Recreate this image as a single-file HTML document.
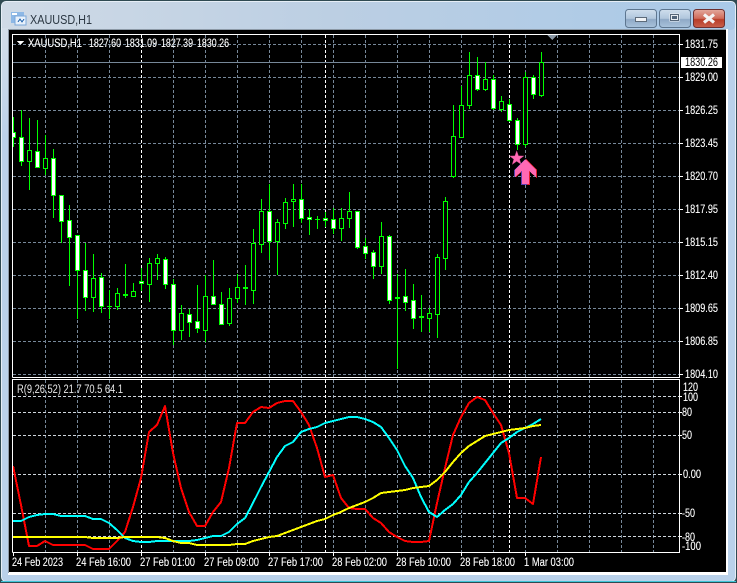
<!DOCTYPE html>
<html><head><meta charset="utf-8"><title>XAUUSD,H1</title>
<style>
html,body{margin:0;padding:0;background:#b9d1ea;width:737px;height:583px;overflow:hidden}
svg{display:block;position:absolute;left:0;top:0}
text{font-family:"Liberation Sans",sans-serif;font-size:11.5px;fill:#fff;stroke:#fff;stroke-width:.12}
.c{shape-rendering:crispEdges}
</style></head><body>
<svg width="737" height="583" viewBox="0 0 737 583" xmlns="http://www.w3.org/2000/svg">
<defs>
<linearGradient id="tb" x1="0" x2="1" y1="0" y2="0"><stop offset="0" stop-color="#cfdae6"/><stop offset=".45" stop-color="#bccfe3"/><stop offset="1" stop-color="#a9c9e8"/></linearGradient>
<linearGradient id="lf" x1="0" x2="0" y1="0" y2="1"><stop offset="0" stop-color="#d3dee9"/><stop offset=".2" stop-color="#bcd2e9"/><stop offset="1" stop-color="#b9d1ea"/></linearGradient>
<linearGradient id="bt" x1="0" x2="0" y1="0" y2="1"><stop offset="0" stop-color="#cfdeed"/><stop offset=".5" stop-color="#b0c6dc"/><stop offset=".55" stop-color="#8fa9c6"/><stop offset="1" stop-color="#a9c3dc"/></linearGradient>
<linearGradient id="cl" x1="0" x2="0" y1="0" y2="1"><stop offset="0" stop-color="#e3a99e"/><stop offset=".5" stop-color="#cf6a58"/><stop offset=".55" stop-color="#b83d28"/><stop offset="1" stop-color="#c9604c"/></linearGradient>
<clipPath id="m"><rect x="13" y="35" width="666" height="342"/></clipPath>
</defs>

<!-- window frame -->
<rect width="737" height="583" fill="#2f4a52"/>
<rect x="1" y="1" width="735" height="581" rx="5" fill="#e6eef6"/>
<rect x="2" y="2" width="733" height="579" rx="4" fill="#b9d1ea"/>
<rect x="2" y="2" width="733" height="28" rx="4" fill="url(#tb)"/>
<rect x="2" y="28" width="7" height="550" fill="url(#lf)"/>
<rect x="1" y="581" width="735" height="1" fill="#3fc6d8"/>
<rect x="8" y="29" width="720" height="546" fill="#fff"/>
<rect x="8" y="29" width="718" height="1" fill="#8c99a6"/>
<rect x="8" y="29" width="1" height="544" fill="#8c99a6"/>
<rect x="9" y="30" width="717" height="542" fill="#000"/>

<!-- title -->
<g class="c">
<rect x="11" y="12" width="13" height="11" fill="#8db8e6"/>
<rect x="15" y="16" width="11" height="9" fill="#e8f1fb" stroke="#7aa6d8"/>
<rect x="12" y="13" width="5" height="2" fill="#fff"/>
<path d="M18 22l2-3 2 3 2-3" fill="none" stroke="#3a76b8"/>
</g>
<text x="30" y="24" style="font-size:12.5px;fill:#2b3743;stroke:none" textLength="62" lengthAdjust="spacingAndGlyphs">XAUUSD,H1</text>

<!-- buttons -->
<rect x="625.5" y="9.5" width="31" height="18" rx="3" fill="url(#bt)" stroke="#5d7690"/>
<rect x="659.5" y="9.5" width="31" height="18" rx="3" fill="url(#bt)" stroke="#5d7690"/>
<rect x="693.5" y="9.5" width="31" height="18" rx="3" fill="url(#cl)" stroke="#6e3030"/>
<rect x="635.5" y="17.5" width="11" height="4" fill="#f0f3f6" stroke="#5d6b7a"/>
<rect x="670" y="14" width="9" height="7" fill="none" stroke="#eef2f6" stroke-width="1"/>
<rect x="670.5" y="14.5" width="8" height="6" fill="#e8edf2" stroke="#56677a"/>
<rect x="672" y="16" width="5" height="3" fill="#51647a"/>
<path d="M704 14.5l10 8M714 14.5l-10 8" stroke="#f4f4f4" stroke-width="3.2" fill="none"/>

<!-- grid main -->
<g class="c" fill="none" stroke="#778899" stroke-dasharray="3 2">
<path d="M13 44.5H679M13 77.5H679M13 110.5H679M13 143.5H679M13 176.5H679M13 209.5H679M13 242.5H679M13 275.5H679M13 308.5H679M13 341.5H679M13 374.5H679"/>
<path d="M45.5 35V377M77.5 35V377M109.5 35V377M173.5 35V377M205.5 35V377M237.5 35V377M269.5 35V377M301.5 35V377M333.5 35V377M365.5 35V377M397.5 35V377M429.5 35V377M461.5 35V377M493.5 35V377M525.5 35V377M557.5 35V377M589.5 35V377M621.5 35V377M653.5 35V377"/>
<path d="M45.5 380V552M77.5 380V552M109.5 380V552M173.5 380V552M205.5 380V552M237.5 380V552M269.5 380V552M301.5 380V552M333.5 380V552M365.5 380V552M397.5 380V552M429.5 380V552M461.5 380V552M493.5 380V552M525.5 380V552M557.5 380V552M589.5 380V552M621.5 380V552M653.5 380V552"/>
</g>
<g class="c" fill="none" stroke="#cfd6dd" stroke-dasharray="3 2">
<path d="M13 396.5H679M13 412.5H679M13 435.5H679M13 474.5H679M13 513.5H679M13 536.5H679"/>
</g>
<g class="c" fill="none" stroke="#fff" stroke-dasharray="3 2">
<path d="M141.5 35V377M325.5 35V377M509.5 35V377M141.5 380V552M325.5 380V552M509.5 380V552"/>
</g>

<!-- price line -->
<path class="c" d="M13 62.5H679" stroke="#778899" fill="none"/>

<!-- candles -->
<g class="c" clip-path="url(#m)">
<path fill="none" stroke="#0f0" d="M13.5 117V147M21.5 110V166M29.5 118V190M37.5 120V168M45.5 135V175M53.5 149V218M61.5 195V243M69.5 205V286M77.5 235V319M85.5 243V311M93.5 254V312M101.5 273V313M109.5 290V319M117.5 288V310M125.5 264V298M133.5 283V297M141.5 268V291M149.5 258V302M157.5 254V280M165.5 257V289M173.5 279V345M181.5 305V340M189.5 309V337M197.5 285V333M205.5 275V342M213.5 260V305M221.5 292V325M229.5 288V326M237.5 274V303M245.5 265V305M253.5 229V304M261.5 199V253M269.5 184V260M277.5 219V275M285.5 198V229M293.5 184V227M301.5 184V223M309.5 209V235M317.5 216V229M325.5 212V227M333.5 208V234M341.5 208V241M349.5 192V228M357.5 211V249M365.5 238V259M373.5 250V279M381.5 222V274M389.5 235V304M397.5 274V369M405.5 269V311M413.5 284V329M421.5 295V332M429.5 308V332M437.5 254V338M445.5 197V270M453.5 105V178M461.5 86V138M469.5 52V109M477.5 57V91M485.5 62V91M493.5 75V110M501.5 96V112M509.5 99V122M517.5 118V150M525.5 72V147M533.5 75V99M541.5 52V97"/>
<path fill="none" stroke="#0f0" d="M107 306.5h5M315 219.5h5"/>
<path fill="#fff" stroke="#0f0" d="M11.5 132.5h4v5h-4zM19.5 137.5h4v24h-4zM35.5 151.5h4v16h-4zM51.5 158.5h4v37h-4zM59.5 195.5h4v26h-4zM67.5 220.5h4v17h-4zM75.5 235.5h4v35h-4zM83.5 270.5h4v27h-4zM99.5 277.5h4v29h-4zM123.5 294.5h4v1h-4zM139.5 281.5h4v2h-4zM163.5 259.5h4v25h-4zM171.5 284.5h4v46h-4zM187.5 314.5h4v8h-4zM195.5 321.5h4v7h-4zM211.5 296.5h4v8h-4zM219.5 304.5h4v20h-4zM243.5 287.5h4v1h-4zM267.5 211.5h4v30h-4zM299.5 199.5h4v19h-4zM307.5 217.5h4v2h-4zM323.5 218.5h4v2h-4zM331.5 219.5h4v9h-4zM355.5 211.5h4v36h-4zM363.5 246.5h4v7h-4zM371.5 252.5h4v14h-4zM387.5 236.5h4v64h-4zM395.5 297.5h4v1h-4zM403.5 296.5h4v6h-4zM411.5 300.5h4v18h-4zM419.5 316.5h4v1h-4zM475.5 75.5h4v14h-4zM491.5 79.5h4v29h-4zM507.5 104.5h4v16h-4zM515.5 120.5h4v24h-4zM531.5 77.5h4v17h-4z"/>
<path fill="#000" stroke="#0f0" d="M27.5 150.5h4v11h-4zM43.5 158.5h4v10h-4zM91.5 278.5h4v19h-4zM115.5 293.5h4v13h-4zM131.5 291.5h4v5h-4zM147.5 263.5h4v21h-4zM155.5 258.5h4v5h-4zM179.5 313.5h4v17h-4zM203.5 296.5h4v34h-4zM227.5 298.5h4v25h-4zM235.5 287.5h4v11h-4zM251.5 243.5h4v47h-4zM259.5 211.5h4v33h-4zM275.5 222.5h4v19h-4zM283.5 202.5h4v21h-4zM291.5 199.5h4v2h-4zM339.5 218.5h4v10h-4zM347.5 211.5h4v7h-4zM379.5 236.5h4v30h-4zM427.5 313.5h4v5h-4zM435.5 257.5h4v57h-4zM443.5 201.5h4v57h-4zM451.5 136.5h4v40h-4zM459.5 105.5h4v32h-4zM467.5 75.5h4v30h-4zM483.5 79.5h4v10h-4zM499.5 101.5h4v8h-4zM523.5 77.5h4v67h-4zM539.5 62.5h4v33h-4z"/>
</g>

<!-- objects -->
<polygon points="516.7,150.8 518.5,155.9 523.8,156 519.6,159.2 521.1,164.4 516.7,161.3 512.3,164.4 513.8,159.2 509.6,156 514.9,155.9" fill="#ff69b4" stroke="#d0478c" stroke-width=".4"/>
<polygon class="c" points="526,159 537,170 537,178 530,172 530,185 522,185 522,171 516,177 516,170" fill="#e01e2c"/>
<polygon class="c" points="525,159 514,170 514,177 521,171 521,185 527,185 527,170" fill="#5a3fb0"/>
<polygon class="c" points="525.5,159 536,170 536,177 529,171 529,184 522,184 522,171 515,177 515,170" fill="#ff69b4"/>
<polygon class="c" points="547,35 557,35 552,40" fill="#8a97a4"/>

<!-- indicator lines -->
<g fill="none" stroke-width="2" stroke-linejoin="round" class="c">
<polyline stroke="#f00" points="13,466 21,505 29,546 37,546 45,541 53,545 61,545 69,545 77,545 85,545 93,549 101,549 109,549 117,541 125,532 133,507 141,478 149,432 157,425 165,406 173,453 181,488 189,512 197,526 205,526 213,512 221,502 229,468 237,423 245,423 253,412 261,407 269,408 277,403 285,401 293,401 301,412 309,425 317,448 325,477 333,475 341,498 349,508 357,509 365,509 373,518 381,523 389,532 397,537 405,541 413,542 421,542 429,541 437,503 445,468 453,435 461,417 469,403 477,397 485,400 493,413 501,425 509,453 517,498 525,498 533,504 541,457"/>
<polyline stroke="#0ff" points="13,521 21,521 29,517 37,515 45,514 53,514 61,516 69,516 77,516 85,516 93,519 101,519 109,523 117,530 125,538 133,541 141,542 149,542 157,541 165,541 173,541 181,541 189,541 197,540 205,538 213,536 221,536 229,532 237,524 245,518 253,503 261,487 269,472 277,457 285,446 293,442 301,432 309,429 317,427 325,423 333,421 341,419 349,417 357,417 365,419 373,422 381,427 389,438 397,450 405,466 413,478 421,497 429,512 437,517 445,510 453,504 461,495 469,482 477,473 485,463 493,453 501,443 509,438 517,432 525,428 533,424 541,419"/>
<polyline stroke="#ff0" points="13,537 85,537 93,538 117,538 125,537 149,537 157,537 165,538 173,541 181,543 189,543 197,545 229,545 237,544 245,544 253,541 261,539 269,537 277,536 285,533 293,530 301,527 309,524 317,521 325,519 333,515 341,512 349,508 357,505 365,502 373,498 381,493 389,492 397,491 405,490 413,488 421,487 429,486 437,480 445,472 453,462 461,453 469,446 477,441 485,436 493,434 501,432 509,430 517,429 525,428 533,426 541,425"/>
</g>

<!-- frames -->
<g class="c" fill="none" stroke="#fff">
<path d="M12.5 377.5V34.5H679.5V377.5H12.5"/>
<path d="M12.5 552.5V379.5H679.5V552.5H12.5"/>
<path d="M680 44.5h3M680 77.5h3M680 110.5h3M680 143.5h3M680 176.5h3M680 209.5h3M680 242.5h3M680 275.5h3M680 308.5h3M680 341.5h3M680 374.5h3M680 396.5h2M680 412.5h2M680 435.5h2M680 474.5h2M680 513.5h2M680 536.5h2"/>
<path d="M13.5 553v3M77.5 553v3M141.5 553v3M205.5 553v3M269.5 553v3M333.5 553v3M397.5 553v3M461.5 553v3M525.5 553v3"/>
</g>

<!-- header text -->
<polygon class="c" points="17,41 24,41 20.5,45" fill="#fff"/>
<text x="28" y="47" textLength="54" lengthAdjust="spacingAndGlyphs">XAUUSD,H1</text>
<text x="89" y="47" textLength="32" lengthAdjust="spacingAndGlyphs">1827.60</text>
<text x="125" y="47" textLength="32" lengthAdjust="spacingAndGlyphs">1831.09</text>
<text x="161" y="47" textLength="32" lengthAdjust="spacingAndGlyphs">1827.39</text>
<text x="197" y="47" textLength="32" lengthAdjust="spacingAndGlyphs">1830.26</text>
<text x="17" y="393" textLength="106" lengthAdjust="spacingAndGlyphs" style="fill:#e8e8e8;stroke:none">R(9,26,52) 21.7 70.5 64.1</text>

<!-- price scale -->
<text x="685" y="48" textLength="33" lengthAdjust="spacingAndGlyphs">1831.75</text>
<text x="685" y="81" textLength="33" lengthAdjust="spacingAndGlyphs">1829.00</text>
<text x="685" y="114" textLength="33" lengthAdjust="spacingAndGlyphs">1826.25</text>
<text x="685" y="147" textLength="33" lengthAdjust="spacingAndGlyphs">1823.45</text>
<text x="685" y="180" textLength="33" lengthAdjust="spacingAndGlyphs">1820.70</text>
<text x="685" y="213" textLength="33" lengthAdjust="spacingAndGlyphs">1817.95</text>
<text x="685" y="246" textLength="33" lengthAdjust="spacingAndGlyphs">1815.15</text>
<text x="685" y="279" textLength="33" lengthAdjust="spacingAndGlyphs">1812.40</text>
<text x="685" y="312" textLength="33" lengthAdjust="spacingAndGlyphs">1809.65</text>
<text x="685" y="345" textLength="33" lengthAdjust="spacingAndGlyphs">1806.85</text>
<text x="685" y="378" textLength="33" lengthAdjust="spacingAndGlyphs">1804.10</text>
<rect class="c" x="681" y="57" width="41" height="11" fill="#fff"/>
<text x="685" y="66" textLength="33" lengthAdjust="spacingAndGlyphs" style="fill:#000;stroke:none">1830.26</text>

<!-- indicator scale -->
<text x="683" y="391" textLength="15" lengthAdjust="spacingAndGlyphs">120</text>
<text x="683" y="401" textLength="15" lengthAdjust="spacingAndGlyphs">100</text>
<text x="682" y="416" textLength="10" lengthAdjust="spacingAndGlyphs">80</text>
<text x="682" y="439" textLength="10" lengthAdjust="spacingAndGlyphs">50</text>
<text x="683" y="478" textLength="18" lengthAdjust="spacingAndGlyphs">0.00</text>
<text x="682" y="517" textLength="13" lengthAdjust="spacingAndGlyphs">-50</text>
<text x="682" y="541" textLength="13" lengthAdjust="spacingAndGlyphs">-80</text>
<text x="682" y="550" textLength="19" lengthAdjust="spacingAndGlyphs">-100</text>

<!-- time scale -->
<text x="12" y="566" textLength="51" lengthAdjust="spacingAndGlyphs">24 Feb 2023</text>
<text x="76" y="566" textLength="55" lengthAdjust="spacingAndGlyphs">24 Feb 16:00</text>
<text x="140" y="566" textLength="55" lengthAdjust="spacingAndGlyphs">27 Feb 01:00</text>
<text x="204" y="566" textLength="55" lengthAdjust="spacingAndGlyphs">27 Feb 09:00</text>
<text x="268" y="566" textLength="55" lengthAdjust="spacingAndGlyphs">27 Feb 17:00</text>
<text x="332" y="566" textLength="55" lengthAdjust="spacingAndGlyphs">28 Feb 02:00</text>
<text x="396" y="566" textLength="55" lengthAdjust="spacingAndGlyphs">28 Feb 10:00</text>
<text x="460" y="566" textLength="55" lengthAdjust="spacingAndGlyphs">28 Feb 18:00</text>
<text x="524" y="566" textLength="50" lengthAdjust="spacingAndGlyphs">1 Mar 03:00</text>
</svg>
</body></html>
